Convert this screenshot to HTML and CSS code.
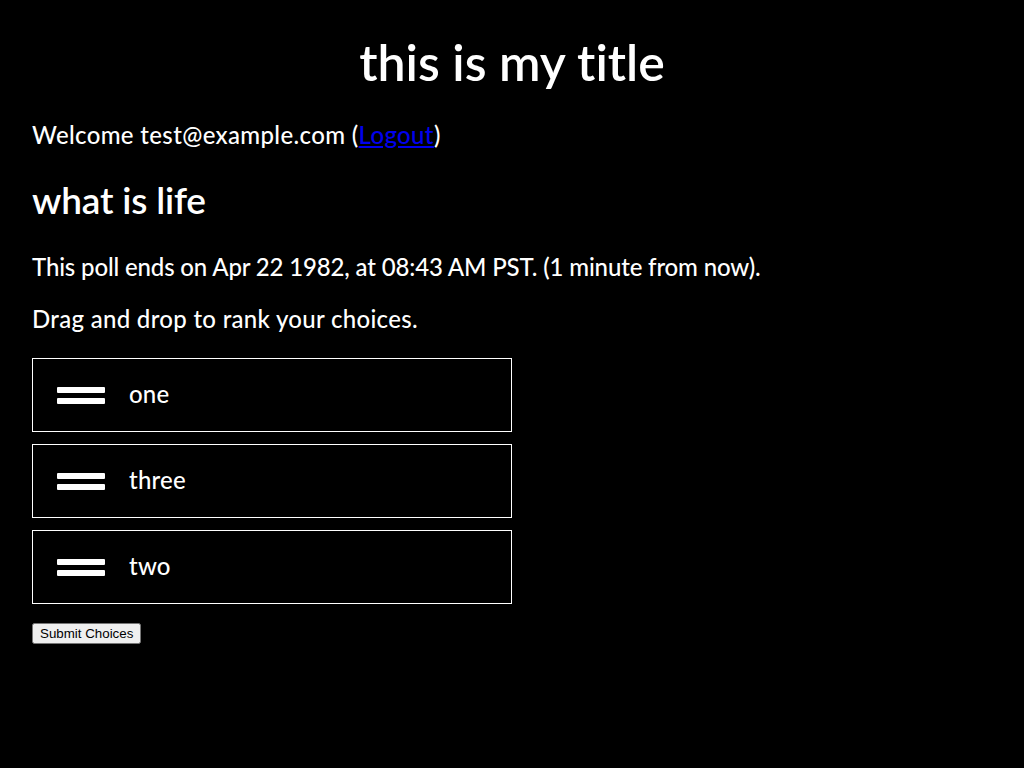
FILE: index.html
```html
<!DOCTYPE html>
<html lang="en">
<head>
<meta charset="utf-8">
<title>Poll</title>
<link rel="stylesheet" href="styles.css">
</head>
<body>
<main class="page">
  <h1 class="title">this is my title</h1>
  <p class="welcome">Welcome test@example.com (<a href="#" class="link">Logout</a>)</p>
  <h2 class="question">what is life</h2>
  <p class="text text-ends">This poll ends on Apr 22 1982, at 08:43 AM PST. (1 minute from now).</p>
  <p class="text text-hint">Drag and drop to rank your choices.</p>
  <ul class="choices">
    <li class="choice"><span class="handle"><span class="bar"></span><span class="bar"></span></span><span class="label">one</span></li>
    <li class="choice"><span class="handle"><span class="bar"></span><span class="bar"></span></span><span class="label">three</span></li>
    <li class="choice"><span class="handle"><span class="bar"></span><span class="bar"></span></span><span class="label">two</span></li>
  </ul>
  <button class="submit" type="button">Submit Choices</button>
</main>
</body>
</html>
```
FILE: styles.css
```css
html, body {
  margin: 0;
  background: #000;
}
body {
  color: #fff;
  font-family: Lato, "Open Sans", sans-serif;
  font-weight: 500;
  font-variant-ligatures: none;
}
.page {
  padding: 0 32px;
}
.title {
  margin: 0;
  padding-top: 30px;
  font-size: 50px;
  font-weight: 600;
  letter-spacing: 0;
  line-height: 64px;
  text-align: center;
}
.welcome {
  margin: 25px 0 0;
  font-size: 24px;
  letter-spacing: 0.35px;
  line-height: 32px;
}
.link {
  color: #0000ee;
}
.question {
  margin: 27px 0 0;
  font-size: 37px;
  font-weight: 600;
  letter-spacing: -0.2px;
  line-height: 44px;
}
.text {
  margin: 29px 0 0;
  font-size: 24px;
  line-height: 32px;
}
.text-ends {
  letter-spacing: -0.15px;
}
.text-hint {
  margin-top: 20px;
  letter-spacing: 0.3px;
}
.choices {
  list-style: none;
  margin: 23px 0 0;
  padding: 0;
  width: 480px;
  display: flex;
  flex-direction: column;
  gap: 12px;
}
.choice {
  box-sizing: border-box;
  height: 74px;
  border: 1px solid #fff;
  display: flex;
  align-items: center;
  padding: 0 0 3px 24px;
  gap: 24px;
  font-size: 24px;
  letter-spacing: 0.2px;
}
.handle {
  display: flex;
  flex-direction: column;
  gap: 5px;
  width: 48px;
  margin-top: 3px;
}
.bar {
  display: block;
  height: 6px;
  background: #fff;
  border-radius: 1px;
}
.submit {
  margin-top: 19px;
  font-family: "Liberation Sans", Arial, sans-serif;
  font-weight: 400;
  font-size: 13.33px;
  letter-spacing: 0;
}
```
